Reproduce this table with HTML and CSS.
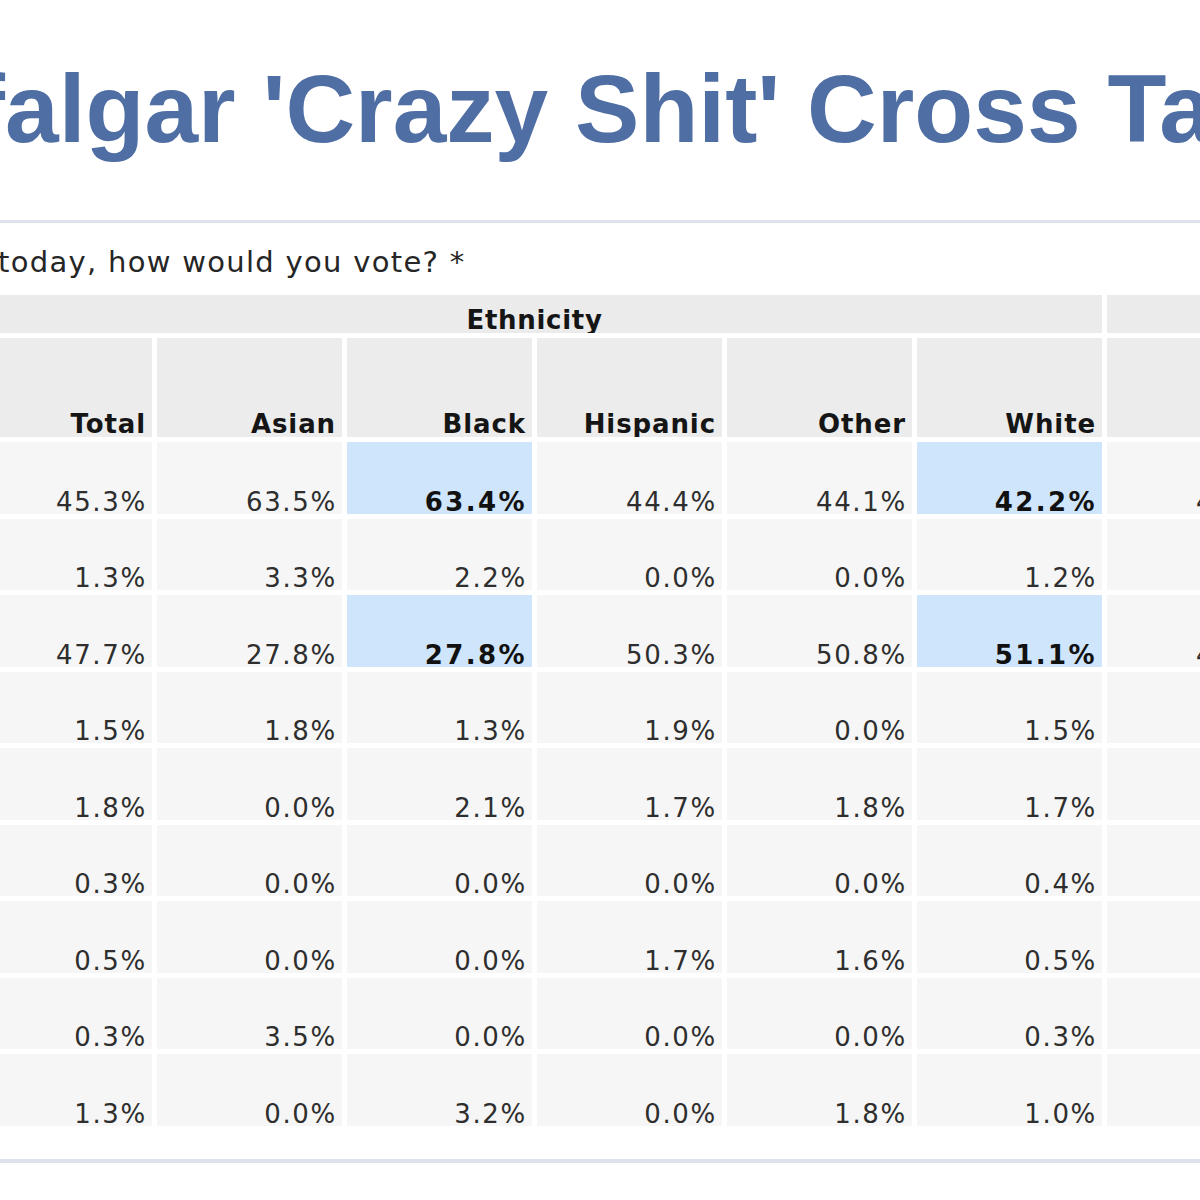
FILE: index.html
```html
<!DOCTYPE html>
<html lang="en">
<head>
<meta charset="utf-8">
<title>Trafalgar 'Crazy Shit' Cross Tabs</title>
<link rel="stylesheet" href="styles.css">
</head>
<body>
<h1 class="title">Trafalgar 'Crazy Shit' Cross Tabs</h1>
<section class="panel">
  <p class="question">today, how would you vote? *</p>
  <table class="xtab">
    <colgroup>
      <col class="col"><col class="col"><col class="col"><col class="col"><col class="col"><col class="col"><col class="col"><col class="col">
    </colgroup>
    <thead>
      <tr class="group-row">
        <th colspan="6" class="group">Ethnicity</th>
        <th colspan="2" class="group"></th>
      </tr>
      <tr class="head-row">
        <th>Total</th><th>Asian</th><th>Black</th><th>Hispanic</th><th>Other</th><th>White</th><th></th><th></th>
      </tr>
    </thead>
    <tbody>
      <tr><td>45.3%</td><td>63.5%</td><td class="hl">63.4%</td><td>44.4%</td><td>44.1%</td><td class="hl">42.2%</td><td>46.0%</td><td>44.5%</td></tr>
      <tr><td>1.3%</td><td>3.3%</td><td>2.2%</td><td>0.0%</td><td>0.0%</td><td>1.2%</td><td>1.1%</td><td>1.5%</td></tr>
      <tr><td>47.7%</td><td>27.8%</td><td class="hl">27.8%</td><td>50.3%</td><td>50.8%</td><td class="hl">51.1%</td><td>47.3%</td><td>48.2%</td></tr>
      <tr><td>1.5%</td><td>1.8%</td><td>1.3%</td><td>1.9%</td><td>0.0%</td><td>1.5%</td><td>1.6%</td><td>1.4%</td></tr>
      <tr><td>1.8%</td><td>0.0%</td><td>2.1%</td><td>1.7%</td><td>1.8%</td><td>1.7%</td><td>1.9%</td><td>1.7%</td></tr>
      <tr><td>0.3%</td><td>0.0%</td><td>0.0%</td><td>0.0%</td><td>0.0%</td><td>0.4%</td><td>0.2%</td><td>0.4%</td></tr>
      <tr><td>0.5%</td><td>0.0%</td><td>0.0%</td><td>1.7%</td><td>1.6%</td><td>0.5%</td><td>0.6%</td><td>0.4%</td></tr>
      <tr><td>0.3%</td><td>3.5%</td><td>0.0%</td><td>0.0%</td><td>0.0%</td><td>0.3%</td><td>0.2%</td><td>0.4%</td></tr>
      <tr><td>1.3%</td><td>0.0%</td><td>3.2%</td><td>0.0%</td><td>1.8%</td><td>1.0%</td><td>1.1%</td><td>1.5%</td></tr>
    </tbody>
  </table>
</section>
</body>
</html>
```
FILE: styles.css
```css
html, body {
  margin: 0;
  padding: 0;
  background: #ffffff;
  overflow: hidden;
}
body {
  width: 1200px;
  height: 1200px;
}
.title {
  margin: 59px 0 0 0;
  font-family: "Liberation Sans", Arial, sans-serif;
  font-weight: bold;
  font-size: 96.5px;
  line-height: 100px;
  height: 100px;
  color: #4f6ea4;
  white-space: nowrap;
  text-indent: -172px;
}
.panel {
  margin-top: 61px;
  border-top: 3px solid #dde3ea;
  border-bottom: 4px solid #dde3ea;
  padding: 22px 0 28px 0;
}
.question {
  margin: 0 0 11px -2px;
  font-family: "DejaVu Sans", Verdana, sans-serif;
  font-size: 29px;
  line-height: 34px;
  letter-spacing: 1.3px;
  color: #262626;
  white-space: nowrap;
}
.xtab {
  margin-left: -38px;
  border-collapse: separate;
  border-spacing: 5px;
  table-layout: fixed;
  width: 1525px;
  font-family: "DejaVu Sans", Verdana, sans-serif;
  font-size: 26px;
}
.col {
  width: 185px;
}
.xtab th,
.xtab td {
  box-sizing: border-box;
  vertical-align: bottom;
  text-align: right;
  line-height: 20px;
  white-space: nowrap;
  overflow: hidden;
}
.group-row th {
  height: 38px;
}
.xtab th.group {
  text-align: center;
  background: #ebebeb;
  color: #151515;
  font-weight: bold;
  letter-spacing: 0.7px;
  padding: 0 0 3px 0;
}
.head-row th {
  height: 99px;
  background: #ececec;
  color: #151515;
  font-weight: bold;
  letter-spacing: 0.9px;
  padding: 0 6px 3px 0;
}
.xtab td {
  height: 71.5px;
  background: #f6f6f6;
  color: #2e2e2e;
  letter-spacing: 1.7px;
  padding: 0 5px 2px 0;
}
.xtab td.hl {
  background: #cfe5fb;
  color: #111111;
  font-weight: bold;
  letter-spacing: 2.4px;
}
```
